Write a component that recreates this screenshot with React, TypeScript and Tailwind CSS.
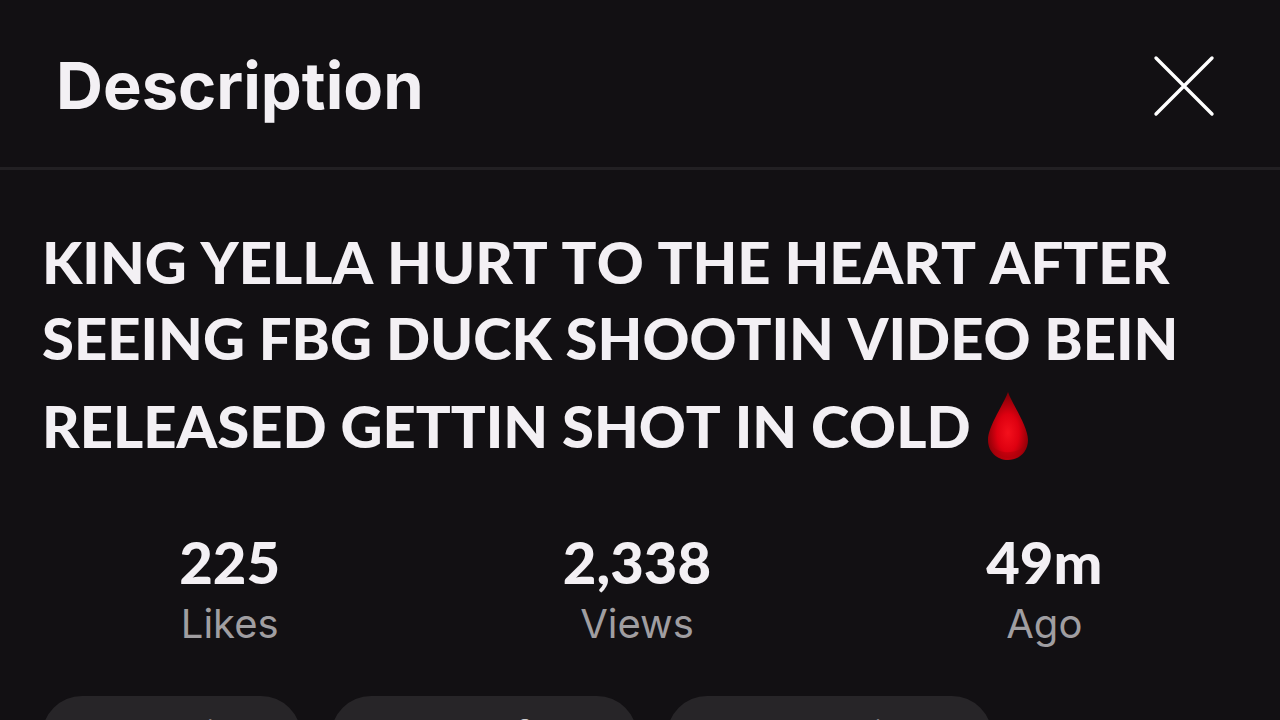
import React from 'react';

const titleLines = [
  'KING YELLA HURT TO THE HEART AFTER',
  'SEEING FBG DUCK SHOOTIN VIDEO BEIN',
];

const stats = [
  { value: '225', label: 'Likes' },
  { value: '2,338', label: 'Views' },
  { value: '49m', label: 'Ago' },
];

const tags = ['#trending', '#shortsfeed', '#shortsvideo'];

const CloseIcon: React.FC = () => (
  <svg viewBox="0 0 64 64" className="w-16 h-16" fill="none" stroke="currentColor" strokeWidth="3.4" strokeLinecap="round" aria-hidden="true">
    <path d="M4 4l56 56M60 4L4 60" />
  </svg>
);

const BloodDrop: React.FC = () => (
  <svg viewBox="0 0 42 70" className="w-[42px] h-[70px] ml-4" role="img" aria-label="Drop of blood">
    <defs>
      <radialGradient id="drop" cx="0.5" cy="0.6" r="0.55">
        <stop offset="0" stopColor="#f4101c" />
        <stop offset="0.5" stopColor="#de0010" />
        <stop offset="1" stopColor="#850007" />
      </radialGradient>
    </defs>
    <path d="M21 1C18 11 1 35 1 49C1 61 10 69 21 69C32 69 41 61 41 49C41 35 24 11 21 1Z" fill="url(#drop)" />
    <path d="M6 56C13 63 29 63 36 56C34 63 28 67 21 67C14 67 8 63 6 56Z" fill="#a8000b" opacity="0.4" />
  </svg>
);

const App: React.FC = () => {
  return (
    <main className="h-screen overflow-hidden bg-[#121013] text-[#f3f0f4] font-['Inter',sans-serif]">
      <header className="flex items-center justify-between h-[170px] pt-1 pl-14 pr-16 border-b-3 border-[#222023]">
        <h1 className="text-[65px] leading-[80px] font-bold">Description</h1>
        <button type="button" aria-label="Close" className="text-white">
          <CloseIcon />
        </button>
      </header>

      <section className="pt-[54px]">
        <h2 className="px-[42px] text-[58px] leading-[76px] font-black whitespace-nowrap font-['Lato',sans-serif] [font-kerning:none]">
          {titleLines.map((line) => (
            <span key={line} className="block">{line}</span>
          ))}
          <span className="flex items-center h-[100px]">
            RELEASED GETTIN SHOT IN COLD
            <BloodDrop />
          </span>
        </h2>

        <dl className="grid grid-cols-3 pt-12 pl-[26px] pr-8 text-center">
          {stats.map((stat) => (
            <div key={stat.label} className="flex flex-col-reverse">
              <dt className="text-[40px] leading-[48px] text-[#a09ea1]">{stat.label}</dt>
              <dd className="text-[58px] leading-[76px] font-black font-['Lato',sans-serif]">{stat.value}</dd>
            </div>
          ))}
        </dl>

        <nav aria-label="Hashtags" className="flex gap-[30px] px-[42px] pt-12">
          {tags.map((tag) => (
            <a key={tag} href="#" className="shrink-0 h-20 px-9 rounded-full bg-[#272528] text-[#cfcdd0] text-[41px] leading-[80px]">
              {tag}
            </a>
          ))}
        </nav>
      </section>
    </main>
  );
};

export default App;
